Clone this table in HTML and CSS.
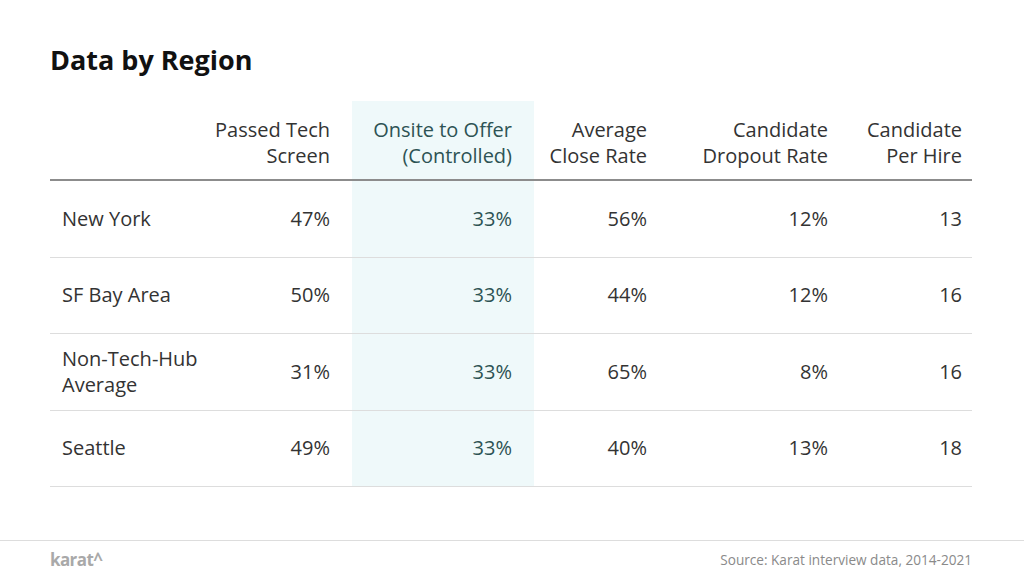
FILE: index.html
```html
<!DOCTYPE html>
<html lang="en">
<head>
<meta charset="utf-8">
<title>Data by Region</title>
<link rel="stylesheet" href="styles.css">
</head>
<body>
<main class="page">
  <h1 class="title">Data by Region</h1>
  <div class="table">
    <div class="row head">
      <div class="cell label"></div>
      <div class="cell num">Passed Tech<br>Screen</div>
      <div class="cell num hl">Onsite to Offer<br>(Controlled)</div>
      <div class="cell num">Average<br>Close Rate</div>
      <div class="cell num">Candidate<br>Dropout Rate</div>
      <div class="cell num last">Candidate<br>Per Hire</div>
    </div>
    <div class="row">
      <div class="cell label">New York</div>
      <div class="cell num">47%</div>
      <div class="cell num hl">33%</div>
      <div class="cell num">56%</div>
      <div class="cell num">12%</div>
      <div class="cell num last">13</div>
    </div>
    <div class="row">
      <div class="cell label">SF Bay Area</div>
      <div class="cell num">50%</div>
      <div class="cell num hl">33%</div>
      <div class="cell num">44%</div>
      <div class="cell num">12%</div>
      <div class="cell num last">16</div>
    </div>
    <div class="row">
      <div class="cell label">Non-Tech-Hub<br>Average</div>
      <div class="cell num">31%</div>
      <div class="cell num hl">33%</div>
      <div class="cell num">65%</div>
      <div class="cell num">8%</div>
      <div class="cell num last">16</div>
    </div>
    <div class="row">
      <div class="cell label">Seattle</div>
      <div class="cell num">49%</div>
      <div class="cell num hl">33%</div>
      <div class="cell num">40%</div>
      <div class="cell num">13%</div>
      <div class="cell num last">18</div>
    </div>
  </div>
</main>
<footer class="footer">
  <span class="logo">karat^</span>
  <span class="source">Source: Karat interview data, 2014-2021</span>
</footer>
</body>
</html>
```

FILE: styles.css
```css
html, body {
  margin: 0;
  padding: 0;
  background: #ffffff;
}

body {
  font-family: "Open Sans", "Noto Sans", sans-serif;
  color: #333333;
  width: 1024px;
  height: 575px;
  overflow: hidden;
}

.page {
  padding: 43px 52px 0 50px;
  height: 497px;
  box-sizing: border-box;
}

.title {
  margin: 0;
  font-size: 27px;
  line-height: 34px;
  font-weight: 700;
  color: #111111;
}

.table {
  margin-top: 24px;
  width: 922px;
}

.row {
  display: grid;
  grid-template-columns: 160px 142px 182px 135px 181px 122px;
  height: 76.5px;
  box-sizing: border-box;
  border-bottom: 1px solid #dddddd;
  font-size: 20px;
  line-height: 26px;
}

.row.head {
  height: 80px;
  border-bottom: 2px solid #8c8c8c;
}

.cell {
  display: flex;
  flex-direction: column;
  justify-content: center;
  box-sizing: border-box;
}

.label {
  padding: 0 0 0 12px;
}

.num {
  text-align: right;
  padding: 0 22px 0 0;
}

.head .cell {
  justify-content: flex-end;
  padding-bottom: 10px;
}

.cell.last {
  padding-right: 10px;
}

.hl {
  background: #eff9fa;
  color: #2d5354;
}

.footer {
  border-top: 1px solid #dddddd;
  margin-top: 43px;
  display: flex;
  justify-content: space-between;
  align-items: center;
  padding: 3px 52px 0 50px;
  height: 34px;
  box-sizing: border-box;
}

.logo {
  font-size: 17px;
  font-weight: 700;
  color: #a9a9a9;
  letter-spacing: -0.6px;
}

.source {
  font-size: 13.6px;
  color: #8a8a8a;
}
```
